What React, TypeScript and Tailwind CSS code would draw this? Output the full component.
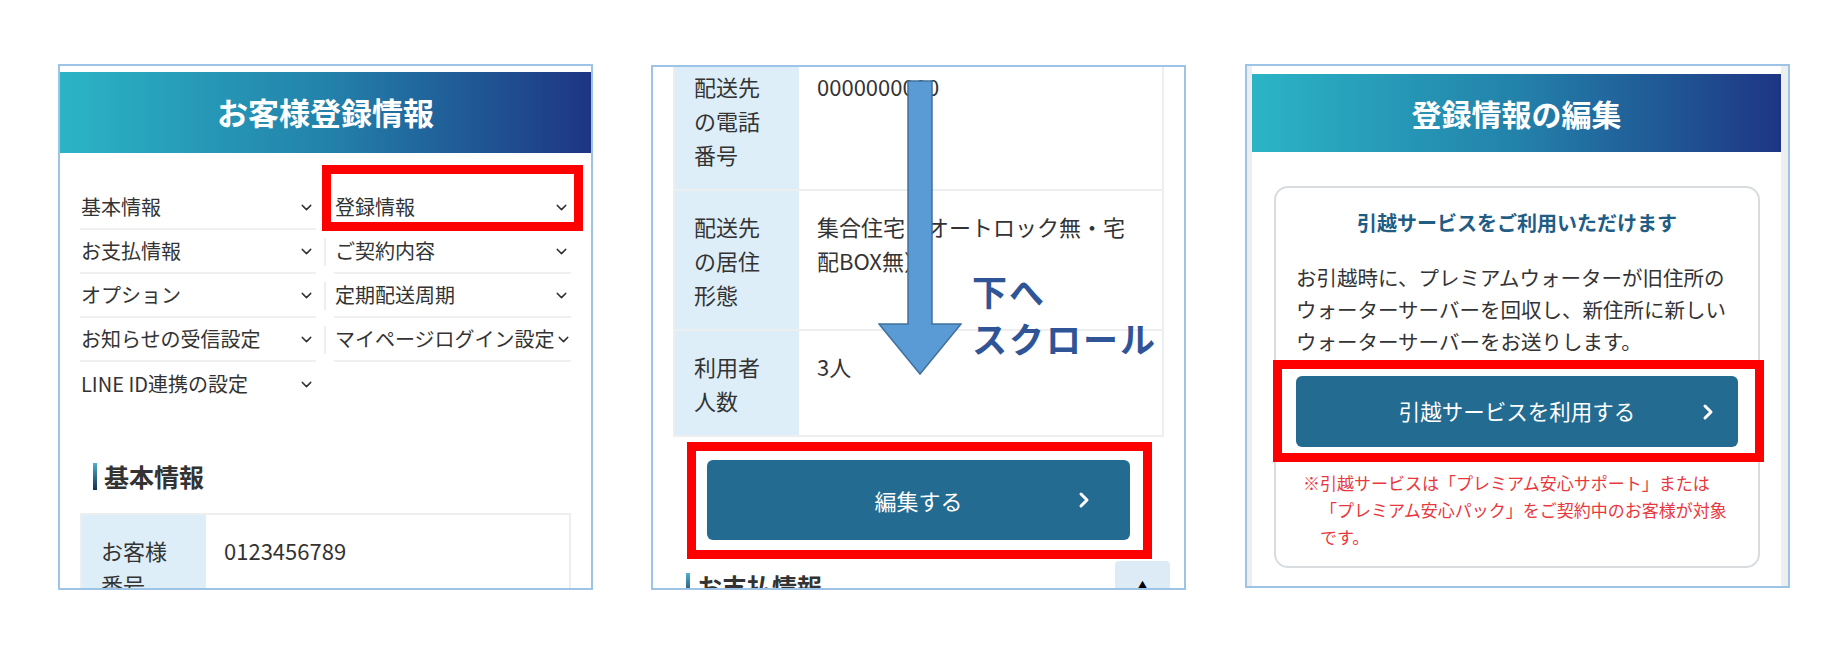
import { ChevronDown, ChevronRight } from "lucide-react";

const menuRows: [string, string | null][] = [
  ["基本情報", "登録情報"],
  ["お支払情報", "ご契約内容"],
  ["オプション", "定期配送周期"],
  ["お知らせの受信設定", "マイページログイン設定"],
  ["LINE ID連携の設定", null],
];

function MenuItem({ label, last }: { label: string; last?: boolean }) {
  return (
    <div
      className={`h-full flex items-center justify-between pl-[1px] pr-[1px] ${
        last ? "" : "border-b-2 border-[#eef0f2]"
      }`}
    >
      <span className="whitespace-nowrap">{label}</span>
      <ChevronDown size={17} strokeWidth={2} className="shrink-0 text-[#333]" />
    </div>
  );
}

function SectionTitle({ children }: { children: string }) {
  return (
    <div className="flex items-center h-[30px]">
      <div className="w-[4px] h-[27px] bg-linear-to-b from-[#4fb0d0] to-[#15334f]" />
      <span className="ml-[7px] text-[25px] font-bold text-[#333] leading-[30px]">{children}</span>
    </div>
  );
}

function InfoRow({ label, value, last }: { label: string; value: string; last?: boolean }) {
  return (
    <div className={`flex ${last ? "" : "border-b-2 border-[#eceef0]"}`}>
      <div className="w-[124px] shrink-0 bg-[#deeef8] pl-[19px] pr-[24px] py-[18px]">{label}</div>
      <div className="flex-1 pl-[18px] pr-[30px] py-[18px]">{value}</div>
    </div>
  );
}

function BlueButton({ label, height, size, chevronPad }: { label: string; height: string; size: string; chevronPad: string }) {
  return (
    <div className={`grid grid-cols-[1fr_auto_1fr] items-center rounded-[6px] bg-[#246b91] text-white ${height} ${size}`}>
      <div />
      <span className="whitespace-nowrap">{label}</span>
      <div className={`flex justify-end ${chevronPad}`}>
        <ChevronRight size={24} strokeWidth={3} />
      </div>
    </div>
  );
}

export default function App() {
  return (
    <div className="w-[1837px] h-[654px] bg-white overflow-hidden flex items-start pt-[64px] pl-[58px] gap-[58px] font-['Noto_Sans_CJK_JP','Noto_Sans',sans-serif] text-[#333]">
      {/* お客様登録情報 */}
      <div className="w-[535px] h-[526px] shrink-0 border-2 border-[#9dc3e6] overflow-hidden pt-[6px]">
        <div className="h-[81px] bg-linear-to-r from-[#2bb4c6] via-[#2382aa] to-[#1e3584] flex items-center justify-center text-white text-[31px] font-bold">
          お客様登録情報
        </div>

        <div className="px-[20px] mt-[33px] text-[20px]">
          {menuRows.map(([left, right], i) => (
            <div key={left} className="grid grid-cols-[236px_18px_237px] h-[44px]">
              <MenuItem label={left} last={i === menuRows.length - 1} />
              <div className="flex justify-center py-[8px]">
                {right && <div className="w-[2px] bg-[#eceef0]" />}
              </div>
              {right ? (
                <div className="relative">
                  <MenuItem label={right} />
                  {i === 0 && (
                    <div className="absolute -left-[12px] -right-[12px] -top-[21px] -bottom-[1px] border-[9px] border-[#ff0000]" />
                  )}
                </div>
              ) : (
                <div />
              )}
            </div>
          ))}

          <div className="mt-[55px] pl-[13px]">
            <SectionTitle>基本情報</SectionTitle>
          </div>

          <div className="mt-[22px] border-2 border-[#eceef0] text-[22px] leading-[34px]">
            <InfoRow label="お客様番号" value="0123456789" last />
          </div>
        </div>
      </div>

      {/* スクロール後 */}
      <div className="relative w-[535px] h-[525px] mt-[1px] shrink-0 border-2 border-[#9dc3e6] overflow-hidden">
        <div className="px-[20px] -mt-[16px]">
          <div className="border-2 border-t-0 border-[#eceef0] text-[22px] leading-[34px]">
            <InfoRow label="配送先の電話番号" value="0000000000" />
            <InfoRow label="配送先の居住形態" value="集合住宅（オートロック無・宅配BOX無）" />
            <InfoRow label="利用者人数" value="3人" last />
          </div>

          <div className="relative mt-[23px] mx-[34px]">
            <BlueButton label="編集する" height="h-[80px]" size="text-[22px]" chevronPad="pr-[34px]" />
            <div className="absolute -left-[20px] -right-[22px] -top-[18px] -bottom-[19px] border-[9px] border-[#ff0000]" />
          </div>

          <div className="mt-[31px] pl-[13px]">
            <SectionTitle>お支払情報</SectionTitle>
          </div>
        </div>

        <div className="absolute right-[14px] top-[494px] w-[55px] h-[55px] rounded-[4px] bg-[#dcebf6] flex justify-center pt-[15px] text-[15px] text-black">
          ▲
        </div>

        <svg className="absolute left-[225px] top-[13px]" width="84" height="296" viewBox="0 0 84 296">
          <polygon
            points="30,1 54,1 54,244 83,244 42,294 1,244 30,244"
            fill="#5b9bd5"
            stroke="#41719c"
            strokeWidth="1.5"
          />
        </svg>

        <div className="absolute left-[319px] top-[200px] text-[35px] leading-[47px] font-bold tracking-[2px] text-[#2f5597]">
          下へ
          <br />
          スクロール
        </div>
      </div>

      {/* 登録情報の編集 */}
      <div className="w-[545px] h-[524px] ml-[1px] shrink-0 border-2 border-[#9dc3e6] overflow-hidden flex">
        <div className="w-[5px] bg-[#eceef0]" />
        <div className="flex-1 bg-white pt-[8px]">
          <div className="h-[78px] bg-linear-to-r from-[#2bb4c6] via-[#2382aa] to-[#1e3584] flex items-center justify-center text-white text-[30px] font-bold">
            登録情報の編集
          </div>

          <div className="mt-[34px] ml-[22px] mr-[21px] border-2 border-[#d9dcdf] rounded-[14px] px-[20px] pt-[20px] pb-[16px]">
            <div className="text-center text-[20px] leading-[30px] font-bold text-[#1f5d85]">
              引越サービスをご利用いただけます
            </div>
            <p className="mt-[23px] text-[20.5px] leading-[32px] whitespace-nowrap">
              お引越時に、プレミアムウォーターが旧住所の
              <br />
              ウォーターサーバーを回収し、新住所に新しい
              <br />
              ウォーターサーバーをお送りします。
            </p>

            <div className="relative mt-[19px]">
              <BlueButton label="引越サービスを利用する" height="h-[71px]" size="text-[21.5px]" chevronPad="pr-[18px]" />
              <div className="absolute -left-[23px] -right-[26px] -top-[16px] -bottom-[15px] border-[9px] border-[#ff0000]" />
            </div>

            <p className="mt-[22px] ml-[7px] pl-[17px] -indent-[17px] text-[17px] leading-[27px] text-[#e8383d] whitespace-nowrap">
              ※引越サービスは「プレミアム安心サポート」または
              <br />
              「プレミアム安心パック」をご契約中のお客様が対象
              <br />
              です。
            </p>
          </div>
        </div>
        <div className="w-[7px] bg-[#eceef0]" />
      </div>
    </div>
  );
}
